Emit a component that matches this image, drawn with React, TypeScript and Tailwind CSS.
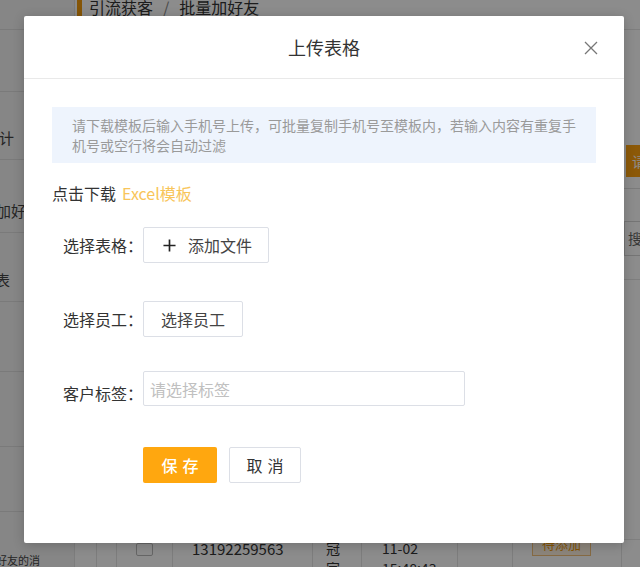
import React from "react";

const font = { fontFamily: '"Noto Sans CJK SC", "Noto Sans", sans-serif' };

function Sidebar() {
  const items: { h: string; text: string; off: string }[] = [
    { h: "h-[30px]", text: "", off: "" },
    { h: "h-[62px]", text: "", off: "" },
    { h: "h-[68px]", text: "数据统计", off: "-ml-[46px]" },
    { h: "h-[73px]", text: "批量加好友", off: "-ml-[34px]" },
    { h: "h-[69px]", text: "名单列表", off: "-ml-[50px]" },
    { h: "h-[70px]", text: "", off: "" },
    { h: "h-[75px]", text: "", off: "" },
    { h: "h-[65px]", text: "", off: "" },
  ];
  return (
    <aside className="w-[75px] shrink-0 bg-[#f4f4f4] flex flex-col border-r border-[#e4e4e4]">
      {items.map((it, i) => (
        <div
          key={i}
          className={`${it.h} shrink-0 border-b border-[#dedede] flex items-end pb-[10px] text-[15px] text-[#444] whitespace-nowrap overflow-hidden`}
        >
          {it.text && <span className={it.off}>{it.text}</span>}
        </div>
      ))}
      <div className="flex-1 flex items-end text-[11px] leading-[14px] text-[#444] whitespace-nowrap overflow-hidden">
        <span className="-ml-[4px]">好友的消</span>
      </div>
    </aside>
  );
}

function Main() {
  return (
    <div className="flex-1 flex flex-col bg-white min-w-0">
      {/* breadcrumb */}
      <div className="h-[22px] -mt-[4px] flex items-center shrink-0">
        <div className="w-[5px] h-full bg-[#f29b0c] ml-[2px]" />
        <div className="ml-[7px] text-[16px] leading-none text-[#333] whitespace-nowrap">
          引流获客<span className="mx-[10px] text-[#888]">/</span>批量加好友
        </div>
      </div>
      <div className="h-[12px] border-b border-[#e6e6e6] shrink-0" />
      {/* toolbar */}
      <div className="h-[147px] shrink-0 flex items-end">
        <div className="ml-[551px] h-[32px] w-[90px] bg-[#ffa20f] text-white text-[14px] flex items-center pl-[6px] whitespace-nowrap">
          请选择
        </div>
      </div>
      <div className="h-[12px] border-b border-[#e0e0e0] shrink-0" />
      <div className="h-[67px] shrink-0 flex items-end">
        <div className="ml-[549px] h-[35px] w-[120px] border border-[#d6d6d6] text-[14px] text-[#666] flex items-center pl-[3px] whitespace-nowrap">
          搜索
        </div>
      </div>
      <div className="h-[24px] border-b border-[#e6e6e6] shrink-0" />
      <div className="flex-1" />
      {/* table row */}
      <div className="h-[28px] shrink-0 border-t border-[#e8e8e8] flex text-[15px] text-[#333]">
        <div className="w-[22px] border-r border-[#e4e4e4]" />
        <div className="w-[20px] border-r border-[#e4e4e4]" />
        <div className="w-[56px] border-r border-[#e4e4e4] flex justify-center pt-[3px]">
          <div className="w-[17px] h-[13px] border border-[#bbb] rounded-[2px] bg-white" />
        </div>
        <div className="w-[140px] border-r border-[#e4e4e4] pl-[19px] pt-[1px] leading-[16px] whitespace-nowrap">
          13192259563
        </div>
        <div className="w-[49px] border-r border-[#e4e4e4] pl-[13px] -mt-[2px] text-[14px] leading-[20px]">
          冠<br />家
        </div>
        <div className="w-[96px] border-r border-[#e4e4e4] pl-[20px] -mt-[2px] text-[14px] leading-[20px] whitespace-nowrap">
          11-02<br />15:48:43
        </div>
        <div className="w-[55px] border-r border-[#e4e4e4]" />
        <div className="w-[109px] border-r border-[#e4e4e4] pl-[19px] -mt-[8px]">
          <div className="w-[59px] h-[24px] border border-[#f5c27a] bg-[#fff3e0] text-[#f29b0c] text-[13px] flex items-center justify-center">
            待添加
          </div>
        </div>
        <div className="flex-1" />
      </div>
    </div>
  );
}

export default function App() {
  return (
    <div className="relative w-[640px] h-[567px] overflow-hidden bg-white" style={font}>
      <div className="flex h-full">
        <Sidebar />
        <Main />
      </div>
      <div className="absolute inset-0 bg-black/45" />

      {/* modal */}
      <div className="absolute left-[24px] top-[16px] w-[600px] h-[527px] bg-white rounded-[2px] shadow-[0_2px_12px_rgba(0,0,0,0.2)] flex flex-col">
        <div className="relative h-[63px] shrink-0 border-b border-[#e9e9e9] flex items-center justify-center">
          <span className="text-[18px] text-[#333] leading-none">上传表格</span>
          <button className="absolute right-[26px] top-[25px] w-[14px] h-[14px]" aria-label="关闭">
            <svg viewBox="0 0 14 14" width="14" height="14">
              <path d="M1 1 L13 13 M13 1 L1 13" stroke="#777" strokeWidth="1.3" fill="none" />
            </svg>
          </button>
        </div>

        <div className="px-[28px] flex flex-col">
          <div className="mt-[28px] bg-[#eef4fd] px-5 py-2 text-[14px] leading-5 text-[#9a9a9a]">
            请下载模板后输入手机号上传，可批量复制手机号至模板内，若输入内容有重复手机号或空行将会自动过滤
          </div>

          <div className="mt-[18px] h-[24px] flex items-center text-[16px] text-[#333] leading-none">
            点击下载<span className="ml-[6px] text-[#f8c55a]">Excel模板</span>
          </div>

          <div className="mt-[22px] flex items-center">
            <div className="ml-[11px] w-[80px] text-[16px] text-[#333] leading-none">选择表格：</div>
            <button className="h-[36px] w-[126px] border border-[#dcdfe6] rounded-[2px] bg-white flex items-center pl-[19px] text-[16px] text-[#444]">
              <svg viewBox="0 0 14 14" width="13" height="13">
                <path d="M7 0.5 V13.5 M0.5 7 H13.5" stroke="#222" strokeWidth="1.8" fill="none" />
              </svg>
              <span className="ml-[12px] leading-none">添加文件</span>
            </button>
          </div>

          <div className="mt-[38px] flex items-center">
            <div className="ml-[11px] w-[80px] text-[16px] text-[#333] leading-none">选择员工：</div>
            <button className="h-[36px] w-[100px] border border-[#dcdfe6] rounded-[2px] bg-white flex items-center justify-center text-[16px] text-[#444] leading-none">
              选择员工
            </button>
          </div>

          <div className="mt-[34px] flex items-center">
            <div className="ml-[11px] mt-2 w-[80px] text-[16px] text-[#333] leading-none">客户标签：</div>
            <div className="h-[35px] w-[322px] border border-[#dcdfe6] rounded-[2px] bg-white flex items-center pl-[6px] text-[16px] text-[#c0c0c0] leading-none">
              请选择标签
            </div>
          </div>

          <div className="mt-[41px] flex items-center">
            <div className="ml-[91px] h-[36px] w-[74px] bg-[#ffa70f] rounded-[2px] flex items-center justify-center pl-[5px] text-[16px] text-white font-medium tracking-[5px] leading-none">
              保存
            </div>
            <div className="ml-[12px] h-[36px] w-[72px] border border-[#dcdfe6] rounded-[2px] bg-white flex items-center justify-center pl-[5px] text-[16px] text-[#333] tracking-[5px] leading-none">
              取消
            </div>
          </div>
        </div>
      </div>
    </div>
  );
}
